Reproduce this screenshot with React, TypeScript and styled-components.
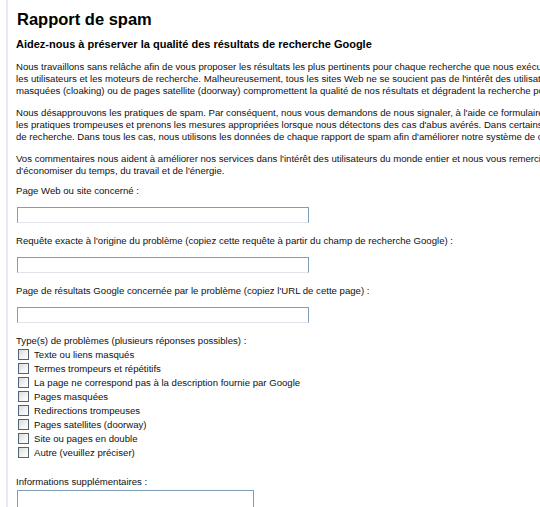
import React from "react";
import styled, { createGlobalStyle } from "styled-components";

const GlobalStyle = createGlobalStyle`
  html, body {
    margin: 0;
    padding: 0;
    background: #fff;
    overflow: hidden;
  }
  body {
    font-family: "Liberation Sans", Arial, sans-serif;
    color: #111;
  }
`;

const Page = styled.div`
  margin-left: 6px;
  border-left: 2px solid #e6e9f6;
  padding: 9px 0 0 8px;
  width: 540px;
  height: 507px;
  box-sizing: border-box;
  overflow: hidden;
`;

const Title = styled.h1`
  margin: 0 0 0 1px;
  font-size: 16.5px;
  line-height: 20px;
  font-weight: bold;
  color: #000;
`;

const Subtitle = styled.h2`
  margin: 9px 0 0 0;
  font-size: 11px;
  line-height: 12px;
  font-weight: bold;
  color: #000;
`;

const Para = styled.p`
  margin: ${(p: { $top?: number }) => p.$top ?? 10}px 0 0 0;
  font-size: 9.6px;
  line-height: 12px;
  white-space: nowrap;
`;

const Field = styled.div`
  display: flex;
  flex-direction: column;
  align-items: flex-start;
  margin-top: ${(p: { $gap: number }) => p.$gap}px;
`;

const Label = styled.label`
  font-size: 9.6px;
  line-height: 12px;
  white-space: nowrap;
`;

const TextInput = styled.input`
  margin: 10px 0 0 1px;
  width: 292px;
  height: 16px;
  box-sizing: border-box;
  border: 1px solid #7f9db9;
  border-bottom-color: #dfe3ea;
  padding: 0 2px;
  background: #fff;
  outline: none;
`;

const TextArea = styled.textarea`
  margin: 2px 0 0 1px;
  width: 237px;
  height: 40px;
  box-sizing: border-box;
  border: 1px solid #7f9db9;
  resize: none;
  background: #fff;
`;

const CheckList = styled.div`
  display: flex;
  flex-direction: column;
`;

const CheckRow = styled.label`
  display: flex;
  align-items: center;
  height: 14px;
  font-size: 9.6px;
  white-space: nowrap;
`;

const Box = styled.span`
  display: inline-block;
  width: 9px;
  height: 9px;
  margin: 0 5px 0 2px;
  border: 1px solid #4f6478;
  background: linear-gradient(135deg, #dcdcd6 0%, #f4f4f0 60%, #ffffff 100%);
`;

const problems = [
  "Texte ou liens masqués",
  "Termes trompeurs et répétitifs",
  "La page ne correspond pas à la description fournie par Google",
  "Pages masquées",
  "Redirections trompeuses",
  "Pages satellites (doorway)",
  "Site ou pages en double",
  "Autre (veuillez préciser)",
];

export default function App() {
  return (
    <>
      <GlobalStyle />
      <Page>
        <Title>Rapport de spam</Title>
        <Subtitle>Aidez-nous à préserver la qualité des résultats de recherche Google</Subtitle>
        <Para $top={11}>
          Nous travaillons sans relâche afin de vous proposer les résultats les plus pertinents pour chaque recherche que nous exécutons, dans l'intérêt de tous
          <br />
          les utilisateurs et les moteurs de recherche. Malheureusement, tous les sites Web ne se soucient pas de l'intérêt des utilisateurs. Certains recourent à des pages
          <br />
          masquées (cloaking) ou de pages satellite (doorway) compromettent la qualité de nos résultats et dégradent la recherche pour tout le monde.
        </Para>
        <Para>
          Nous désapprouvons les pratiques de spam. Par conséquent, nous vous demandons de nous signaler, à l'aide ce formulaire, les sites qui ont recours à
          <br />
          les pratiques trompeuses et prenons les mesures appropriées lorsque nous détectons des cas d'abus avérés. Dans certains cas, nous modifions nos algorithmes
          <br />
          de recherche. Dans tous les cas, nous utilisons les données de chaque rapport de spam afin d'améliorer notre système de classement.
        </Para>
        <Para>
          Vos commentaires nous aident à améliorer nos services dans l'intérêt des utilisateurs du monde entier et nous vous remercions de nous permettre
          <br />
          d'économiser du temps, du travail et de l'énergie.
        </Para>

        <Field $gap={8}>
          <Label>Page Web ou site concerné :</Label>
          <TextInput />
        </Field>
        <Field $gap={12}>
          <Label>Requête exacte à l'origine du problème (copiez cette requête à partir du champ de recherche Google) :</Label>
          <TextInput />
        </Field>
        <Field $gap={12}>
          <Label>Page de résultats Google concernée par le problème (copiez l'URL de cette page) :</Label>
          <TextInput />
        </Field>

        <Field $gap={12}>
          <Label>Type(s) de problèmes (plusieurs réponses possibles) :</Label>
          <CheckList>
            {problems.map((p) => (
              <CheckRow key={p}>
                <Box />
                {p}
              </CheckRow>
            ))}
          </CheckList>
        </Field>

        <Field $gap={17}>
          <Label>Informations supplémentaires :</Label>
          <TextArea />
        </Field>
      </Page>
    </>
  );
}
